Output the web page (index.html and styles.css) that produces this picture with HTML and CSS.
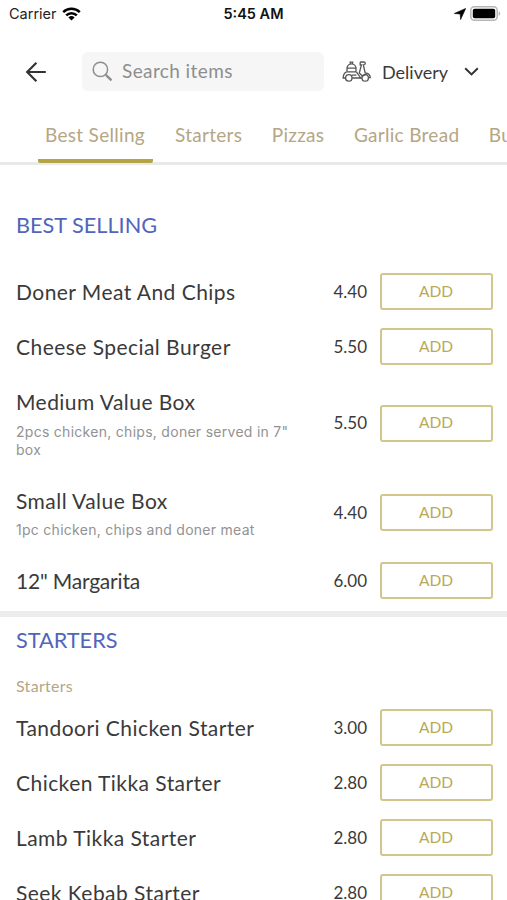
FILE: index.html
```html
<!DOCTYPE html>
<html lang="en">
  <head>
    <meta charset="UTF-8" />
    <meta name="viewport" content="width=device-width, initial-scale=1" />
    <title>Menu</title>
    <link rel="stylesheet" href="styles.css">
  </head>
  <body>
    <div class="status-bar">
      <div class="status-left">
        <span class="carrier">Carrier</span>
        <svg width="19" height="14" viewBox="0 0 19 14">
          <path d="M1.2 5.2a12 12 0 0 1 16.6 0M4.2 8.4a7.6 7.6 0 0 1 10.6 0" fill="none" stroke="#000" stroke-width="2.5" />
          <path d="M6.4 10.5a4.6 4.6 0 0 1 6.2 0L9.5 13.6z" />
        </svg>
      </div>
      <span class="clock">5:45 AM</span>
      <div class="status-right">
        <svg width="12" height="12" viewBox="0 0 12 12">
          <path d="M11.7.4 6.6 11.6 6.2 6 .3 5.5z" stroke="#000" stroke-width=".6" />
        </svg>
        <svg width="31" height="15" viewBox="0 0 31 15">
          <rect x=".8" y=".8" width="26.4" height="13.4" rx="3.6" fill="#fff" stroke="#b5b5b5" stroke-width="1.5" />
          <rect x="2.8" y="2.8" width="22.4" height="9.4" rx="1.8" />
          <path d="M28.7 5.2c2 .8 2 3.8 0 4.6z" fill="#b5b5b5" />
        </svg>
      </div>
    </div>

    <header class="header">
      <svg class="back" width="22" height="22" viewBox="0 0 22 22">
        <path d="M20.8 11H2.4M11.4 1.8 2.2 11l9.2 9.2" />
      </svg>
      <div class="search">
        <svg width="21" height="21" viewBox="0 0 21 21">
          <circle cx="8.4" cy="8.4" r="7.2" />
          <path class="handle" d="m13.8 13.8 5.7 5.5" />
        </svg>
        <span>Search items</span>
      </div>
      <div class="order-type">
        <svg class="scooter" width="29" height="21" viewBox="0 0 29 21">
          <path d="M5 10.6V7.3a4.5 4.5 0 0 1 9 0v3.3M4.4 7.2h10.2M4.6 10.8h9.8M8.2 2.6V1.2h2.4v1.4" />
          <path d="M4.6 10.8C2.2 11.8 1.2 14 1.2 17h2.3M10.1 17h8.6l-4.3-6.2M9.6 14.2h4.8" />
          <path d="M18.2 1h3.5c1.2 0 1.7.8 1.5 1.8-.2.8-.8 1-1.9 1l1.9 8.2c3 .1 4.9 2 5.1 4.6h-1.5M18.2 1v2.8h1.2L17.3 12l3.3 3.2 4.6-2.8M18.7 17h1.2" />
          <circle cx="6.8" cy="16.9" r="3.2" />
          <circle cx="23.2" cy="16.9" r="3.2" />
        </svg>
        <span class="order-label">Delivery</span>
        <svg class="chevron" width="15" height="9" viewBox="0 0 15 9">
          <path d="m1.2 1.2 6.3 6.2 6.3-6.2" />
        </svg>
      </div>
    </header>

    <nav class="tabs">
      <div class="tab active">Best Selling</div>
      <div class="tab">Starters</div>
      <div class="tab">Pizzas</div>
      <div class="tab">Garlic Bread</div>
      <div class="tab">Burgers</div>
    </nav>

    <section class="section best-selling">
      <h2>BEST SELLING</h2>
      <div class="item">
        <div class="info"><h3>Doner Meat And Chips</h3></div>
        <span class="price">4.40</span>
        <button class="add">ADD</button>
      </div>
      <div class="item">
        <div class="info"><h3>Cheese Special Burger</h3></div>
        <span class="price">5.50</span>
        <button class="add">ADD</button>
      </div>
      <div class="item">
        <div class="info">
          <h3>Medium Value Box</h3>
          <p>2pcs chicken, chips, doner served in 7" box</p>
        </div>
        <span class="price">5.50</span>
        <button class="add">ADD</button>
      </div>
      <div class="item">
        <div class="info">
          <h3>Small Value Box</h3>
          <p>1pc chicken, chips and doner meat</p>
        </div>
        <span class="price">4.40</span>
        <button class="add">ADD</button>
      </div>
      <div class="item">
        <div class="info"><h3 class="tight">12" Margarita</h3></div>
        <span class="price">6.00</span>
        <button class="add">ADD</button>
      </div>
    </section>

    <section class="section starters">
      <h2>STARTERS</h2>
      <div class="subtitle">Starters</div>
      <div class="item">
        <div class="info"><h3>Tandoori Chicken Starter</h3></div>
        <span class="price">3.00</span>
        <button class="add">ADD</button>
      </div>
      <div class="item">
        <div class="info"><h3>Chicken Tikka Starter</h3></div>
        <span class="price">2.80</span>
        <button class="add">ADD</button>
      </div>
      <div class="item">
        <div class="info"><h3>Lamb Tikka Starter</h3></div>
        <span class="price">2.80</span>
        <button class="add">ADD</button>
      </div>
      <div class="item">
        <div class="info"><h3>Seek Kebab Starter</h3></div>
        <span class="price">2.80</span>
        <button class="add">ADD</button>
      </div>
    </section>
  </body>
</html>
```
FILE: styles.css
```css
* {
  box-sizing: border-box;
}
body {
  margin: 0;
  height: 900px;
  overflow: hidden;
  background-color: #fff;
  color: #3a3a3a;
  font-family: Lato, sans-serif;
}
h2,
h3,
p {
  margin: 0;
  font-weight: 400;
}
svg {
  display: block;
  flex: none;
}

/* Status bar */
.status-bar {
  display: grid;
  grid-template-columns: 1fr auto 1fr;
  align-items: center;
  height: 27px;
  padding: 0 6px 0 9px;
  font-family: Inter, sans-serif;
  font-size: 14.5px;
  color: #222;
}
.status-left,
.status-right {
  display: flex;
  align-items: center;
  gap: 5px;
}
.status-right {
  justify-content: flex-end;
  gap: 4px;
}
.clock {
  margin-right: 3px;
  font-weight: 600;
  color: #111;
}

/* Header */
.header {
  display: flex;
  align-items: center;
  height: 89px;
  padding-left: 25px;
}
.back {
  fill: none;
  stroke: #333;
  stroke-width: 2.2;
}
.search {
  display: flex;
  align-items: center;
  gap: 9px;
  width: 242px;
  height: 39px;
  margin-left: 35px;
  padding-left: 10px;
  border-radius: 6px;
  background-color: #f6f6f6;
  color: #8e8e8e;
  font-size: 19px;
  line-height: 22px;
  letter-spacing: 0.4px;
}
.search span {
  padding-bottom: 1px;
}
.search svg {
  fill: none;
  stroke: #8e8e8e;
  stroke-width: 1.5;
}
.search .handle {
  stroke-width: 2.4;
}
.order-type {
  display: flex;
  align-items: center;
  margin-left: 18px;
}
.scooter {
  fill: none;
  stroke: #555;
  stroke-width: 1.3;
}
.order-label {
  margin-left: 11px;
  width: 82px;
  font-size: 18px;
}
.chevron {
  fill: none;
  stroke: #333;
  stroke-width: 2;
}

/* Tabs */
.tabs {
  display: flex;
  height: 49px;
  padding-left: 38px;
  border-bottom: 3px solid #e9e9e9;
  overflow-x: clip;
  white-space: nowrap;
  font-size: 19px;
  letter-spacing: 0.3px;
  color: #b5a684;
}
.tab {
  flex: none;
  height: 47px;
  padding: 7px 7px 0;
  margin-right: 15.5px;
  line-height: 24px;
}
.tab.active {
  padding-right: 8px;
  margin-right: 15px;
  border-bottom: 4px solid #b4a446;
  border-radius: 0 0 2px 2px;
}

/* Menu sections */
.section {
  padding: 0 14.5px 0 16px;
}
.section h2 {
  font-size: 21.7px;
  line-height: 28px;
  color: #5065bb;
}
.best-selling {
  padding-top: 46px;
  padding-bottom: 3px;
  border-bottom: 6px solid #ededed;
}
.best-selling h2 {
  margin-bottom: 25px;
}
.starters {
  padding-top: 9px;
}
.subtitle {
  margin: 22px 0 4px;
  font-size: 16px;
  line-height: 20px;
  letter-spacing: 0.3px;
  color: #b5a684;
}
.item {
  display: flex;
  align-items: center;
  padding: 14px 0;
}
.info {
  width: 290px;
}
.info h3 {
  font-size: 21px;
  line-height: 27px;
  letter-spacing: 0.45px;
}
.info .tight {
  letter-spacing: -0.2px;
}
.info p {
  width: 285px;
  margin-top: 7.5px;
  font-family: Inter, sans-serif;
  font-size: 14px;
  line-height: 18px;
  letter-spacing: 0.28px;
  color: #929292;
}
.price {
  width: 61px;
  padding-bottom: 1px;
  text-align: right;
  font-size: 17px;
}
.add {
  width: 113px;
  height: 37px;
  margin: -5px 0 -5px auto;
  padding: 0 0 2px;
  border: 2px solid #d3c68a;
  border-radius: 3px;
  background-color: #fff;
  color: #b8a957;
  font-family: inherit;
  font-size: 15.5px;
}
```
